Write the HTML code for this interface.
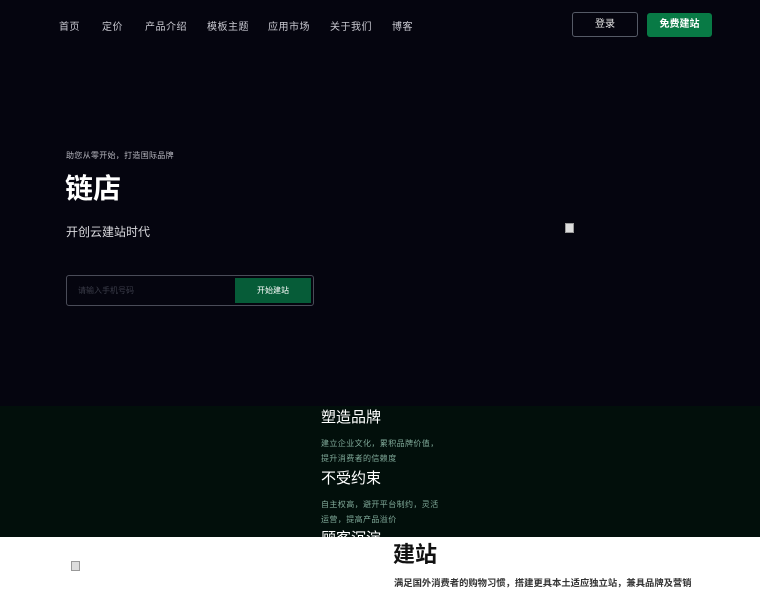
<!DOCTYPE html>
<html><head><meta charset="utf-8"><style>
*{margin:0;padding:0;box-sizing:border-box}
body{width:760px;height:600px;overflow:hidden;background:#fff;font-family:"Liberation Sans","Noto Sans CJK SC",sans-serif;position:relative}
.top{position:absolute;left:0;top:0;width:760px;height:406px;background:#05050f}
.nav a{position:absolute;top:18px;font-size:10px;letter-spacing:0.5px;color:#c8c8d0;text-decoration:none}
.btn1{position:absolute;left:572px;top:12px;width:66px;height:25px;border:1px solid #555a66;border-radius:3px;color:#e6e6e6;font-size:10px;text-align:center;line-height:23px}
.btn2{position:absolute;left:647px;top:13px;width:65px;height:24px;background:#087a45;border-radius:3px;color:#fff;font-size:10px;font-weight:bold;text-align:center;line-height:24px}
.t{position:absolute;color:#fff;white-space:nowrap}
.green{position:absolute;left:0;top:406px;width:760px;height:131px;background:#020f0b;overflow:hidden}
.img{position:absolute;width:9px;height:10px;border:1px solid #999;background:#ddd}
</style></head><body>
<div class="top">
<div class="nav">
<a style="left:59px">首页</a><a style="left:102px">定价</a><a style="left:145px">产品介绍</a><a style="left:207px">模板主题</a><a style="left:268px">应用市场</a><a style="left:330px">关于我们</a><a style="left:392px">博客</a>
</div>
<div class="btn1">登录</div><div class="btn2">免费建站</div>
<div class="t" style="left:66px;top:150px;font-size:8px;letter-spacing:0.3px;color:#b8b8c0">助您从零开始，打造国际品牌</div>
<div class="t" style="left:65px;top:172px;font-size:28px;font-weight:bold;line-height:34px">链店</div>
<div class="t" style="left:66px;top:223px;font-size:12px;color:#d8d8dc">开创云建站时代</div>
<div style="position:absolute;left:66px;top:275px;width:248px;height:31px;border:1px solid #4a4c58;border-radius:3px"></div>
<div class="t" style="left:78px;top:285px;font-size:8px;color:#3a3c48">请输入手机号码</div>
<div style="position:absolute;left:235px;top:278px;width:76px;height:25px;background:#065c38;color:#fff;font-size:8px;text-align:center;line-height:25px">开始建站</div>
<div class="img" style="left:565px;top:223px"></div>
</div>
<div class="green">
<div class="t" style="left:321px;top:0px;font-size:15px">塑造品牌</div>
<div class="t" style="left:321px;top:30px;font-size:8px;letter-spacing:0.4px;color:#7fa898;line-height:15px">建立企业文化，累积品牌价值，<br>提升消费者的信赖度</div>
<div class="t" style="left:321px;top:61px;font-size:15px">不受约束</div>
<div class="t" style="left:321px;top:91px;font-size:8px;letter-spacing:0.4px;color:#7fa898;line-height:15px">自主权高，避开平台制约，灵活<br>运营，提高产品溢价</div>
<div class="t" style="left:321px;top:121px;font-size:15px">顾客沉淀</div>
</div>
<div class="img" style="left:71px;top:561px"></div>
<div class="t" style="left:393px;top:537px;font-size:22px;font-weight:bold;color:#111">建站</div>
<div class="t" style="left:394px;top:575px;font-size:9.3px;font-weight:bold;color:#333">满足国外消费者的购物习惯，搭建更具本土适应独立站，兼具品牌及营销</div>
</body></html>
